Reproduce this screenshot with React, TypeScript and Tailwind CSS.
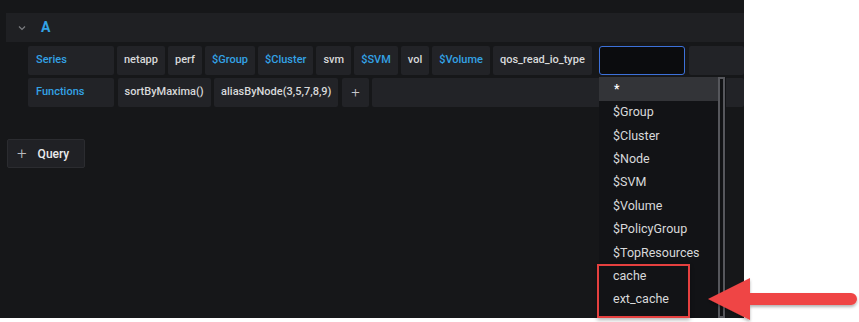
import React from "react";

type Seg = { text: string; variable?: boolean };

const series: Seg[] = [
	{ text: "netapp" },
	{ text: "perf" },
	{ text: "$Group", variable: true },
	{ text: "$Cluster", variable: true },
	{ text: "svm" },
	{ text: "$SVM", variable: true },
	{ text: "vol" },
	{ text: "$Volume", variable: true },
	{ text: "qos_read_io_type" },
];

const options = [
	"$Group",
	"$Cluster",
	"$Node",
	"$SVM",
	"$Volume",
	"$PolicyGroup",
	"$TopResources",
	"cache",
	"ext_cache",
];

function Chip({ seg }: { seg: Seg }) {
	return (
		<div
			className={`h-full flex items-center px-[7px] bg-[#222327] rounded-[2px] text-[11px] font-medium ${seg.variable ? "text-[#33a2e5]" : "text-[#d8d9da]"}`}>
			{seg.text}
		</div>
	);
}

export default function App() {
	return (
		<div className="w-[859px] h-[322px] bg-white relative font-['Roboto',sans-serif]">
			<div className="w-[744px] h-[318px] bg-[#161719] pt-[13px] pl-[6px]">
				{/* query header */}
				<div className="h-[29px] bg-[#1f2023] flex items-center pl-[12px]">
					<svg width="8" height="6" viewBox="0 0 8 6" className="mr-[15px]">
						<path d="M1 1.5 L4 4.5 L7 1.5" stroke="#7b7c80" strokeWidth="1.2" fill="none" />
					</svg>
					<span className="text-[#33a2e5] font-bold text-[14px]">A</span>
				</div>

				<div className="pl-[22px] mt-[4px] flex flex-col gap-[3px]">
					{/* series row */}
					<div className="h-[29px] flex gap-[3px]">
						<div className="w-[86px] h-full flex items-center px-2 bg-[#222327] rounded-[2px] text-[11px] font-medium text-[#33a2e5]">
							Series
						</div>
						{series.map((s) => (
							<Chip key={s.text} seg={s} />
						))}
						<div className="w-[86px] h-full ml-[4px] bg-[#0b0c0e] border border-[#3d71d9] rounded-[3px]" />
						<div className="flex-1 h-full ml-[1px] bg-[#222327] rounded-[2px]" />
					</div>

					{/* functions row */}
					<div className="h-[29px] flex gap-[3.5px]">
						<div className="w-[86px] h-full flex items-center px-2 bg-[#222327] rounded-[2px] text-[11px] font-medium text-[#33a2e5]">
							Functions
						</div>
						<Chip seg={{ text: "sortByMaxima()" }} />
						<Chip seg={{ text: "aliasByNode(3,5,7,8,9)" }} />
						<div className="w-[27px] h-full flex items-center justify-center bg-[#222327] rounded-[2px] text-[#c7c8cc] text-[15px] font-light">
							+
						</div>
						<div className="flex-1 h-full bg-[#222327] rounded-[2px]" />
					</div>
				</div>

				<button className="mt-[32px] ml-[1px] h-[29px] w-[78px] flex items-center bg-[#202125] border border-[#2b2c30] rounded-[2px] pl-[9px]">
					<span className="text-[#b9babd] text-[17px] font-light leading-none mr-[11px]">+</span>
					<span className="text-[#e9eaec] text-[12px] font-medium">Query</span>
				</button>
			</div>

			{/* segment dropdown */}
			<div className="absolute left-[599px] top-[77px] w-[127px] h-[241px] bg-[#121316] overflow-hidden">
				<div className="h-[24px] w-[119px] bg-[#333438] flex items-center pl-[15px] text-white text-[12px] font-bold">
					*
				</div>
				{options.map((o) => (
					<div key={o} className="h-[23.4px] flex items-center pl-[14px] text-[#d8d9da] text-[12.5px]">
						{o}
					</div>
				))}
				<div className="absolute right-[1px] top-0 w-[7px] h-full bg-[#111214] border-2 border-[#56575c]" />
			</div>

			{/* highlight */}
			<div className="absolute left-[597px] top-[264px] w-[93px] h-[54px] border-[2.5px] border-[#e5403f] shadow-[0_2px_4px_rgba(0,0,0,0.3)]" />
			<svg className="absolute left-[700px] top-[272px]" width="159" height="50" viewBox="0 0 159 50">
				<defs>
					<filter id="sh" x="-10%" y="-20%" width="120%" height="150%">
						<feDropShadow dx="0" dy="2" stdDeviation="1.5" floodOpacity="0.3" />
					</filter>
				</defs>
				<g filter="url(#sh)">
					<path d="M8 27 L50 6 L50 21 L151 21 A6 6 0 0 1 151 33 L50 33 L50 48 Z" fill="#ef4444" />
				</g>
			</svg>
		</div>
	);
}
